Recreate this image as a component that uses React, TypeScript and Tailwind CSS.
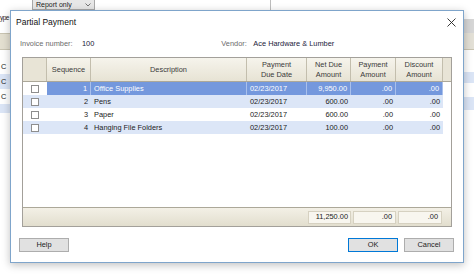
import React from "react";

const font = { fontFamily: '"Liberation Sans", Arial, sans-serif' };

const cols = [
  { w: "w-[24px]", label: "" },
  { w: "w-[44px]", label: "Sequence" },
  { w: "w-[156px]", label: "Description" },
  { w: "w-[60px]", label: "Payment\nDue Date" },
  { w: "w-[44px]", label: "Net Due\nAmount" },
  { w: "w-[45px]", label: "Payment\nAmount" },
  { w: "w-[47px]", label: "Discount\nAmount" },
];

const rows = [
  { seq: 1, desc: "Office Supplies", date: "02/23/2017", net: "9,950.00", pay: ".00", disc: ".00" },
  { seq: 2, desc: "Pens", date: "02/23/2017", net: "600.00", pay: ".00", disc: ".00" },
  { seq: 3, desc: "Paper", date: "02/23/2017", net: "600.00", pay: ".00", disc: ".00" },
  { seq: 4, desc: "Hanging File Folders", date: "02/23/2017", net: "100.00", pay: ".00", disc: ".00" },
];

const Checkbox = () => (
  <div className="w-[8px] h-[8px] border border-[#8e8e8e] bg-white" />
);

const Background = () => (
  <div className="absolute inset-0 flex flex-col bg-white">
    <div className="h-[10px] flex">
      <div className="w-[32px]" />
      <div className="w-[63px] h-[10px] bg-[#e7e7e7] border border-t-0 border-[#a9a9a9] flex items-center justify-between px-[3px] text-[7px] leading-[8px] text-[#222]">
        <span>Report only</span>
        <svg width="6" height="4" viewBox="0 0 6 4">
          <path d="M0.5 0.5 L3 3 L5.5 0.5" stroke="#555" fill="none" strokeWidth="0.8" />
        </svg>
      </div>
      <div className="w-[175px]" />
      <div className="w-[1px] bg-[#bdbdbd]" />
    </div>
    <div className="flex-1 flex">
      <div className="w-[10px] flex flex-col text-[7.4px] text-[#222] overflow-hidden">
        <div className="h-[16px] flex items-center text-[6.5px] tracking-[-0.6px]">ype</div>
        <div className="h-[7px]" />
        <div className="h-[17px] bg-[#e3dfd0] border-y border-[#c9c4b2]" />
        <div className="h-[10px]" />
        <div className="h-[14px] flex items-center pl-[1px]">C</div>
        <div className="h-[15px] flex items-center pl-[1px] bg-[#dbe5f6]">C</div>
        <div className="h-[15px] flex items-center pl-[1px]">C</div>
        <div className="h-[9px] bg-[#dbe5f6]" />
      </div>
      <div className="flex-1" />
      <div className="w-[11px] flex flex-col">
        <div className="h-[9px]" />
        <div className="h-[14px] bg-[#d6d6d6]" />
        <div className="h-[17px] bg-[#e3e0d6] border-b border-[#c9c4b2]" />
        <div className="h-[22px]" />
        <div className="h-[11px] bg-[#dbe5f6]" />
        <div className="h-[14px]" />
        <div className="h-[13px] bg-[#dbe5f6]" />
      </div>
    </div>
  </div>
);

const Grid = () => (
  <div className="ml-[11px] mt-[7px] w-[430px] h-[170px] border border-[#a3a09a] flex flex-col bg-white">
    <div className="h-[24px] flex border-b border-[#aca899] bg-linear-to-b from-[#f6f4ec] to-[#e7e3d4]">
      {cols.map((c, i) => (
        <div
          key={i}
          className={`${c.w} shrink-0 border-r border-[#c3bead] flex items-center justify-center text-center whitespace-pre leading-[10px] text-[7.4px] text-[#3a3a3a] ${i === 0 ? "bg-[#e8e4d6]" : ""}`}
        >
          {c.label}
        </div>
      ))}
      <div className="flex-1 bg-[#e8e4d6]" />
    </div>
    <div className="flex-1 flex flex-col text-[7.4px]">
      {rows.map((r, i) => {
        const sel = i === 0;
        const alt = i % 2 === 1;
        const cellBg = sel ? "bg-[#7498dd] text-white border-r border-[#a9c0ec]" : alt ? "bg-[#dce6f7] text-[#222]" : "bg-white text-[#222]";
        const dateColor = sel ? "" : "text-[#3d2020]";
        return (
          <div key={r.seq} className="h-[13px] flex">
            <div className={`w-[24px] shrink-0 flex items-center justify-center ${alt ? "bg-[#dce6f7]" : "bg-white"}`}>
              <Checkbox />
            </div>
            <div className={`w-[44px] shrink-0 flex items-center justify-end pr-[3px] ${cellBg}`}>{r.seq}</div>
            <div className={`w-[156px] shrink-0 flex items-center pl-[3px] ${cellBg}`}>{r.desc}</div>
            <div className={`w-[60px] shrink-0 flex items-center pl-[3px] ${cellBg} ${dateColor}`}>{r.date}</div>
            <div className={`w-[44px] shrink-0 flex items-center justify-end pr-[3px] ${cellBg} ${sel ? "bg-[#87a3da]" : ""}`}>{r.net}</div>
            <div className={`w-[45px] shrink-0 flex items-center justify-end pr-[3px] ${cellBg}`}>{r.pay}</div>
            <div className={`w-[47px] shrink-0 flex items-center justify-end pr-[3px] ${cellBg}`}>{r.disc}</div>
          </div>
        );
      })}
    </div>
    <div className="h-[19px] flex items-center border-t border-[#aca899] bg-linear-to-b from-[#f3f0e6] to-[#e2dece] text-[7.4px] text-[#222]">
      <div className="w-[285px] shrink-0" />
      <div className="w-[43px] h-[13px] shrink-0 bg-[#f8f6ef] border border-[#d6d1c1] flex items-center justify-end pr-[2px]">11,250.00</div>
      <div className="w-[2px] shrink-0" />
      <div className="w-[43px] h-[13px] shrink-0 bg-[#f8f6ef] border border-[#d6d1c1] flex items-center justify-end pr-[3px]">.00</div>
      <div className="w-[2px] shrink-0" />
      <div className="w-[44px] h-[13px] shrink-0 bg-[#f8f6ef] border border-[#d6d1c1] flex items-center justify-end pr-[3px]">.00</div>
    </div>
  </div>
);

const Button = ({ label, primary }: { label: string; primary?: boolean }) => (
  <div
    className={`w-[50px] h-[14px] flex items-center justify-center text-[7.4px] text-[#222] bg-[#e1e1e1] border ${primary ? "border-[#0078d7]" : "border-[#adadad]"}`}
  >
    {label}
  </div>
);

export default function App() {
  return (
    <div className="relative w-[474px] h-[274px] overflow-hidden bg-white" style={font}>
      <Background />
      <div className="absolute left-[10px] top-[10px] w-[454px] border border-[#7fa5cb] bg-white flex flex-col shadow-[0_2px_8px_rgba(0,0,0,0.25)]">
        <div className="h-[22px] flex items-center justify-between pl-[5px] pr-[7px]">
          <span className="text-[8.5px] text-[#111]">Partial Payment</span>
          <svg width="9" height="9" viewBox="0 0 9 9">
            <path d="M0.5 0.5 L8.5 8.5 M8.5 0.5 L0.5 8.5" stroke="#222" strokeWidth="0.9" />
          </svg>
        </div>
        <div className="mt-[5px] h-[12px] flex items-center text-[7.4px]">
          <span className="ml-[9px] w-[62px] text-[#6b6b6b]">Invoice number:</span>
          <span className="text-[#22223a]">100</span>
          <div className="w-[127px]" />
          <span className="w-[32px] text-[#6b6b6b]">Vendor:</span>
          <span className="text-[#22223a]">Ace Hardware &amp; Lumber</span>
        </div>
        <Grid />
        <div className="mt-[11px] mb-[10px] flex items-center">
          <div className="ml-[8px]">
            <Button label="Help" />
          </div>
          <div className="flex-1" />
          <div className="flex gap-[6px] mr-[9px]">
            <Button label="OK" primary />
            <Button label="Cancel" />
          </div>
        </div>
      </div>
    </div>
  );
}
